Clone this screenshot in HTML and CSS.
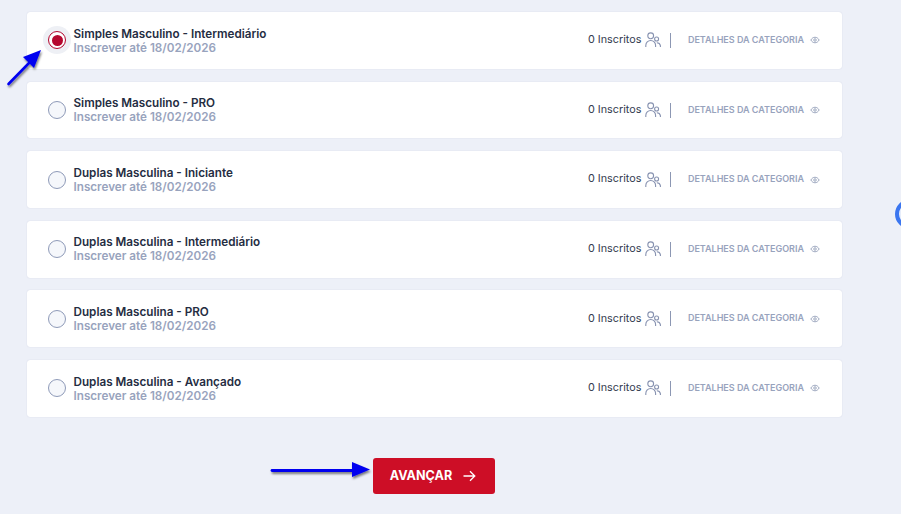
FILE: index.html
```html
<!doctype html>
<html lang="en">
<head>
	<meta charset="UTF-8">
	<title>Categorias</title>
	<link rel="stylesheet" href="styles.css">
</head>
<body>
	<svg width="0" height="0" class="defs">
		<symbol id="users" viewBox="0 0 16 16">
			<circle cx="5.7" cy="3.8" r="2.9"/>
			<circle cx="11.6" cy="7" r="2"/>
			<path d="M.8 15v-1.6a4.9 4.9 0 0 1 9.8 0V15M11.8 10.7a3.6 3.6 0 0 1 3.6 3V15"/>
		</symbol>
		<symbol id="eye" viewBox="0 0 12 12">
			<path d="M1 6c1.3-2.2 3-3.3 5-3.3s3.700 1.100 5 3.300c-1.300 2.200-3 3.300-5 3.300S2.300 8.200 1 6z"/>
			<circle cx="6" cy="6" r="1.500"/>
		</symbol>
	</svg>

	<div class="list">
		<div class="card">
			<span class="radio checked"></span>
			<div class="info">
				<div class="name">Simples Masculino - Intermediário</div>
				<div class="deadline">Inscrever até 18/02/2026</div>
			</div>
			<div class="count">0 Inscritos</div>
			<svg class="icon-users"><use href="#users"/></svg>
			<span class="sep"></span>
			<a class="details">DETALHES DA CATEGORIA</a>
			<svg class="icon-eye"><use href="#eye"/></svg>
		</div>
		<div class="card">
			<span class="radio"></span>
			<div class="info">
				<div class="name">Simples Masculino - PRO</div>
				<div class="deadline">Inscrever até 18/02/2026</div>
			</div>
			<div class="count">0 Inscritos</div>
			<svg class="icon-users"><use href="#users"/></svg>
			<span class="sep"></span>
			<a class="details">DETALHES DA CATEGORIA</a>
			<svg class="icon-eye"><use href="#eye"/></svg>
		</div>
		<div class="card">
			<span class="radio"></span>
			<div class="info">
				<div class="name">Duplas Masculina - Iniciante</div>
				<div class="deadline">Inscrever até 18/02/2026</div>
			</div>
			<div class="count">0 Inscritos</div>
			<svg class="icon-users"><use href="#users"/></svg>
			<span class="sep"></span>
			<a class="details">DETALHES DA CATEGORIA</a>
			<svg class="icon-eye"><use href="#eye"/></svg>
		</div>
		<div class="card">
			<span class="radio"></span>
			<div class="info">
				<div class="name">Duplas Masculina - Intermediário</div>
				<div class="deadline">Inscrever até 18/02/2026</div>
			</div>
			<div class="count">0 Inscritos</div>
			<svg class="icon-users"><use href="#users"/></svg>
			<span class="sep"></span>
			<a class="details">DETALHES DA CATEGORIA</a>
			<svg class="icon-eye"><use href="#eye"/></svg>
		</div>
		<div class="card">
			<span class="radio"></span>
			<div class="info">
				<div class="name">Duplas Masculina - PRO</div>
				<div class="deadline">Inscrever até 18/02/2026</div>
			</div>
			<div class="count">0 Inscritos</div>
			<svg class="icon-users"><use href="#users"/></svg>
			<span class="sep"></span>
			<a class="details">DETALHES DA CATEGORIA</a>
			<svg class="icon-eye"><use href="#eye"/></svg>
		</div>
		<div class="card">
			<span class="radio"></span>
			<div class="info">
				<div class="name">Duplas Masculina - Avançado</div>
				<div class="deadline">Inscrever até 18/02/2026</div>
			</div>
			<div class="count">0 Inscritos</div>
			<svg class="icon-users"><use href="#users"/></svg>
			<span class="sep"></span>
			<a class="details">DETALHES DA CATEGORIA</a>
			<svg class="icon-eye"><use href="#eye"/></svg>
		</div>
	</div>

	<div class="actions">
		<button class="next" type="button">
			AVANÇAR
			<svg width="14" height="14" viewBox="0 0 14 14"><path d="M1.500 7h11M8 2.200 12.800 7 8 11.800"/></svg>
		</button>
	</div>

	<!-- annotations drawn over the page -->
	<svg class="arrows" width="901" height="514" viewBox="0 0 901 514">
		<defs>
			<filter id="shadow" x="-30%" y="-60%" width="160%" height="220%">
				<feDropShadow dx="1" dy="2" stdDeviation="1.200" flood-color="#000" flood-opacity=".5"/>
			</filter>
		</defs>
		<g filter="url(#shadow)" fill="#0000f0">
			<path d="M8.500 84 30 62" stroke="#0000f0" stroke-width="2.600" stroke-linecap="round"/>
			<path d="M41 50 34 68 23 57z"/>
			<path d="M272 470.500H355" stroke="#0000f0" stroke-width="2.800" stroke-linecap="round"/>
			<path d="M370 469.500 352 477V462z"/>
		</g>
	</svg>
	<div class="widget"></div>
</body>
</html>
```

FILE: styles.css
```css
html, body {
	height: 100%;
}
body {
	margin: 0;
	background: #edf0f8;
	font-family: "Inter", "Liberation Sans", sans-serif;
	overflow: hidden;
	position: relative;
}
.defs {
	position: absolute;
}

.list {
	width: 815px;
	margin-left: 27px;
	padding-top: 12px;
	display: flex;
	flex-direction: column;
	gap: 12.700px;
}

.card {
	height: 56.900px;
	box-sizing: border-box;
	display: flex;
	align-items: center;
	padding: 0 21px 0 21px;
	background: #fff;
	border-radius: 3px;
	box-shadow: 0 0 1px rgba(120, 130, 170, .35);
}

.radio {
	flex: none;
	width: 18px;
	height: 18px;
	box-sizing: border-box;
	border: 1px solid #8e9ab8;
	border-radius: 50%;
	background: #f5f7fb;
	margin-right: 7.500px;
}
.radio.checked {
	border: 1.500px solid #b5082f;
	background: #b5082f;
	background-clip: content-box;
	padding: 2.500px;
	box-shadow: 0 0 0 5px #eef0f5;
}

.info {
	flex: 1;
	min-width: 0;
	margin-top: .4px;
}
.name {
	font-size: 11.700px;
	line-height: 14px;
	font-weight: 600;
	color: #252d42;
}
.deadline {
	font-size: 11.700px;
	line-height: 14px;
	font-weight: 600;
	color: #98a3bd;
}

.count {
	font-size: 10.800px;
	color: #343b50;
	margin: 0 3.500px 1.400px 0;
}
.icon-users {
	width: 16px;
	height: 16px;
	fill: none;
	stroke: #8792b0;
	stroke-width: 1.100;
}
.sep {
	width: 1px;
	height: 15px;
	background: #8c97b3;
	margin: 0 17px 0 9px;
}
.details {
	font-size: 9px;
	font-weight: 600;
	color: #98a3bd;
	margin: 0 6px 2px 0;
}
.icon-eye {
	width: 10px;
	height: 10px;
	margin-right: 1px;
	fill: none;
	stroke: #8c97b3;
	stroke-width: 1;
}

.actions {
	margin: 41.200px 0 0 373px;
}
.next {
	width: 122px;
	height: 36px;
	border: 0;
	border-radius: 3px;
	background: #cd0e26;
	color: #fff;
	font-family: inherit;
	font-size: 12.600px;
	font-weight: 700;
	display: flex;
	align-items: center;
	justify-content: center;
	gap: 10px;
	padding: 0 2px 0 0;
}
.next svg {
	fill: none;
	stroke: #fff;
	stroke-width: 1.300;
}

.arrows {
	position: absolute;
	left: 0;
	top: 0;
	pointer-events: none;
}
.widget {
	position: absolute;
	left: 895px;
	top: 199px;
	width: 30px;
	height: 30px;
	box-sizing: border-box;
	border: 4px solid #3b76f0;
	border-radius: 50%;
	background: #e6edfb;
}
```
